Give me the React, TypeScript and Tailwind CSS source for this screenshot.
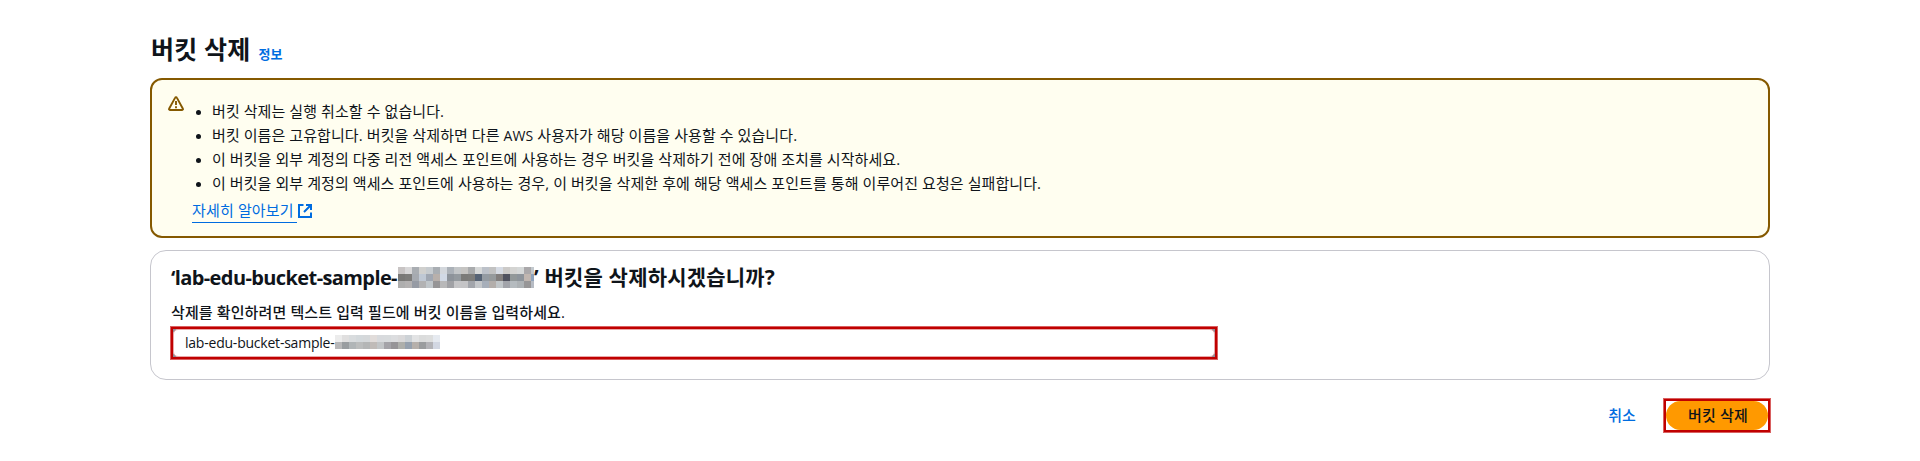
import type { ReactNode } from 'react';

const titleMosaic = [
  ['#c8c4c4', '#d8d7d8', '#a9adb2', '#d0d0ce', '#c6cbcf', '#a9aeb3', '#d3d7dc', '#abb1b8', '#c3c6c8', '#c5c4c2', '#a9abad', '#d6d8d8', '#bcc1c9', '#c2c2c2', '#d6dbe4', '#cccac8', '#d4d4d2', '#d5d8d8', '#aaa8aa', '#c3c9ce'],
  ['#797876', '#7d7c7a', '#a6aab0', '#bfc8d4', '#a0a7b2', '#b8b0ab', '#d1d9e5', '#8d939a', '#949a9f', '#7b7b79', '#7d7d7b', '#566375', '#949ba2', '#969a9c', '#827e7d', '#50525f', '#929899', '#8d949b', '#c0b6b0', '#8ea3bd'],
  ['#aeaeae', '#b4b2b2', '#969ba4', '#b2b2b3', '#c0c6ca', '#969596', '#b8b8b9', '#a0a1a5', '#c5c5c7', '#c4c4c6', '#a2a5ab', '#c4c7ca', '#a7afba', '#b3aeab', '#c1c6c9', '#a2a4aa', '#b5bbbf', '#adb2b5', '#979697', '#b7bcc4'],
];

const inputMosaic = [
  ['#ececec', '#e0dfdf', '#d9dcde', '#d4d9dc', '#d5d8da', '#e1dcda', '#d8dadd', '#d8dbdd', '#dcdddf', '#dad9da', '#cdd2d6', '#e2e3e4', '#dbdcdc', '#dddede', '#e6eaf0'],
  ['#b8b8b9', '#999da0', '#b0b5b7', '#bbbdbd', '#b4b6b6', '#c0bbb8', '#c2c5c7', '#a4a3a8', '#969497', '#aeafab', '#96a1ae', '#b6b0ab', '#9a9c9e', '#b3b3b7', '#d2d7e2'],
];

function Mosaic({ rows, className }: { rows: string[][]; className: string }) {
  return (
    <span aria-hidden="true" className={`block shrink-0 overflow-hidden ${className}`}>
      {rows.map((row, r) => (
        <span key={r} className="flex">
          {row.map((color, c) => (
            <span key={c} className="h-[7px] w-[7px] shrink-0" style={{ backgroundColor: color }} />
          ))}
        </span>
      ))}
    </span>
  );
}

function Highlight({ className, children }: { className: string; children: ReactNode }) {
  return (
    <div className={`border border-[#d96060] ${className}`}>
      <div className="h-full border-2 border-[#c00000]">{children}</div>
    </div>
  );
}

function WarningIcon() {
  return (
    <svg viewBox="0 0 16 16" className="h-4 w-4 shrink-0" fill="none" stroke="#855900" strokeWidth="1.9" strokeLinejoin="round">
      <path d="M7.2 1.6C7.5 0.9 8.5 0.9 8.8 1.6L14.9 12.8C15.2 13.4 14.8 14 14.2 14H1.8C1.2 14 0.8 13.4 1.1 12.8Z" />
      <path d="M8 5v4M8 10.2v2" />
    </svg>
  );
}

function ExternalIcon() {
  return (
    <svg viewBox="0 0 16 16" className="h-4 w-4 shrink-0" fill="none" stroke="#006ce0" strokeWidth="2">
      <path d="M14 9.5V14H2V2h4.5" />
      <path d="M9 2h5v5M14 2 7 9" />
    </svg>
  );
}

const notices: ReactNode[] = [
  '버킷 삭제는 실행 취소할 수 없습니다.',
  <>
    버킷 이름은 고유합니다. 버킷을 삭제하면 다른 <span className="text-[14px]">AWS</span> 사용자가 해당 이름을 사용할 수 있습니다.
  </>,
  '이 버킷을 외부 계정의 다중 리전 액세스 포인트에 사용하는 경우 버킷을 삭제하기 전에 장애 조치를 시작하세요.',
  '이 버킷을 외부 계정의 액세스 포인트에 사용하는 경우, 이 버킷을 삭제한 후에 해당 액세스 포인트를 통해 이루어진 요청은 실패합니다.',
];

export default function App() {
  return (
    <main className="h-[461px] overflow-hidden bg-white px-[150px] pt-[34px] font-['Open_Sans','Noto_Sans_CJK_KR',sans-serif] text-[15px] leading-5 whitespace-nowrap text-[#0f141a]">
      <header className="flex h-[44px] items-start">
        <h1 className="pl-px text-[25px] leading-[30px] font-bold tracking-[0.2px]">버킷 삭제</h1>
        <a className="mt-3 ml-2 text-[13px] leading-4 font-bold text-[#006ce0]">정보</a>
      </header>

      <section className="flex h-[160px] rounded-xl border-2 border-[#855900] bg-[#fffef0] pt-4 pl-4">
        <WarningIcon />
        <div className="ml-2 pt-[3px]">
          <ul>
            {notices.map((notice, i) => (
              <li key={i} className="flex h-6 items-center">
                <span className="mt-0.5 mr-[11px] ml-[4px] h-[5px] w-[5px] rounded-full bg-[#0f141a]" />
                <span className="tracking-[0.08px]">{notice}</span>
              </li>
            ))}
          </ul>
          <a className="mt-1 flex items-center text-[#006ce0]">
            <span className="h-6 border-b border-[#006ce0] pt-px pr-[3px] tracking-[0.15px]">자세히 알아보기</span>
            <ExternalIcon />
          </a>
        </div>
      </section>

      <section className="mt-3 h-[130px] rounded-2xl border border-[#c6c6cd] pt-[15px] pl-[19px]">
        <h2 className="flex h-[23px] items-center pl-px text-[20px] font-bold">
          <span className="w-[227px] tracking-[-0.6px]">‘lab-edu-bucket-sample-</span>
          <Mosaic rows={titleMosaic} className="h-[21px] w-[136px]" />
          <span className="pb-0.5 text-[21px] tracking-[0.2px]">’ 버킷을 삭제하시겠습니까?</span>
        </h2>
        <p className="mt-[13px] pl-px font-medium tracking-[0.12px]">삭제를 확인하려면 텍스트 입력 필드에 버킷 이름을 입력하세요.</p>
        <Highlight className="mt-1 h-[34px] w-[1048px]">
          <div className="h-full bg-[#8c8c94]">
            <div className="flex h-full items-center rounded-[5px] border border-[#e9a9a9] bg-white pl-[11px]">
              <span className="w-[150px] text-[14px] tracking-[-0.22px]">lab-edu-bucket-sample-</span>
              <Mosaic rows={inputMosaic} className="mb-[3px] h-[14px] w-[105px]" />
            </div>
          </div>
        </Highlight>
      </section>

      <footer className="mt-[18px] -mr-px flex items-center justify-end font-medium tracking-[0.1px]">
        <button className="mr-[27px] pb-0.5 text-[#006ce0]">취소</button>
        <Highlight className="h-[35px] w-[108px]">
          <button className="block h-full w-full rounded-full bg-[#ff9900] pb-0.5 pl-0.5 tracking-[0.2px]">버킷 삭제</button>
        </Highlight>
      </footer>
    </main>
  );
}
